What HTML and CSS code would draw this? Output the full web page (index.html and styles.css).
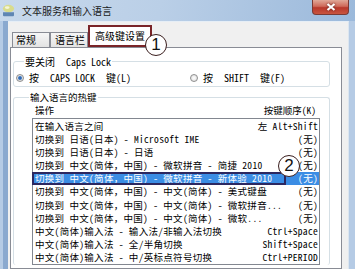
FILE: index.html
```html
<!DOCTYPE html>
<html lang="zh-CN">
<head>
    <meta charset="UTF-8">
    <title>文本服务和输入语言</title>
    <link rel="stylesheet" href="styles.css">
</head>
<body>

<div class="window">
    <div class="titlebar">
        <svg class="app-icon" viewBox="0 0 13 13">
            <ellipse cx="6.5" cy="4.6" rx="5.6" ry="3.8" fill="#d9dc8c"/>
            <ellipse cx="5.2" cy="3.6" rx="2.4" ry="1.4" fill="#f4f5d8"/>
            <path d="M1 8.2 h11 v3 a1 1 0 0 1 -1 1 h-9 a1 1 0 0 1 -1 -1z" fill="#5f86b3"/>
        </svg>
        <span class="title">文本服务和输入语言</span>
        <div class="close">
            <svg viewBox="0 0 10 8"><path d="M1.5 1 L8.5 7 M8.5 1 L1.5 7"/></svg>
        </div>
    </div>

    <div class="frame">
        <div class="dialog">
            <div class="tabs">
                <div class="tab">常规</div>
                <div class="tab">语言栏</div>
                <div class="tab active">高级键设置</div>
            </div>

            <div class="tab-page">
                <fieldset class="group caps">
                    <legend>要关闭 <span class="key">Caps Lock</span></legend>
                    <div class="radios">
                        <label class="radio">
                            <span class="dot checked"></span>
                            <span>按 <span class="key">CAPS LOCK</span> 键(L)</span>
                        </label>
                        <label class="radio">
                            <span class="dot"></span>
                            <span>按 <span class="key">SHIFT</span> 键(F)</span>
                        </label>
                    </div>
                </fieldset>

                <fieldset class="group hotkeys">
                    <legend>输入语言的热键</legend>
                    <div class="list-head">
                        <span>操作</span>
                        <span>按键顺序(K)</span>
                    </div>
                    <div class="list">
                        <div class="row"><span>在输入语言之间</span><span>左 Alt+Shift</span></div>
                        <div class="row"><span>切换到 日语(日本) - Microsoft IME</span><span>(无)</span></div>
                        <div class="row"><span>切换到 日语(日本) - 日语</span><span>(无)</span></div>
                        <div class="row"><span>切换到 中文(简体，中国) - 微软拼音 - 简捷 2010</span><span>(无)</span></div>
                        <div class="row selected">
                            <span>切换到 中文(简体，中国) - 微软拼音 - 新体验 2010</span><span>(无)</span>
                            <div class="mark"></div>
                        </div>
                        <div class="row"><span>切换到 中文(简体，中国) - 中文(简体) - 美式键盘</span><span>(无)</span></div>
                        <div class="row"><span>切换到 中文(简体，中国) - 中文(简体) - 微软拼音...</span><span>(无)</span></div>
                        <div class="row"><span>切换到 中文(简体，中国) - 中文(简体) - 微软...</span><span>(无)</span></div>
                        <div class="row"><span>中文(简体)输入法 - 输入法/非输入法切换</span><span>Ctrl+Space</span></div>
                        <div class="row"><span>中文(简体)输入法 - 全/半角切换</span><span>Shift+Space</span></div>
                        <div class="row"><span>中文(简体)输入法 - 中/英标点符号切换</span><span>Ctrl+PERIOD</span></div>
                    </div>
                </fieldset>
            </div>
        </div>
    </div>

    <!-- annotation callouts -->
    <div class="callout one">1</div>
    <div class="callout two">2</div>
</div>

</body>
</html>
```

FILE: styles.css
```css
body {
    margin: 0;
    width: 355px;
    height: 269px;
    overflow: hidden;
    font-family: "Noto Sans Mono CJK SC", "Liberation Mono", "Noto Sans CJK SC", monospace;
    font-size: 10px;
    color: #000;
    background: #b4cae3;
}

.window {
    position: relative;
    height: 269px;
    display: flex;
    flex-direction: column;
}

.titlebar {
    height: 21px;
    flex: none;
    display: flex;
    align-items: flex-start;
    background: linear-gradient(100deg, #c8d9ec 0%, #bacfe7 45%, #9bb9db 100%);
}

.app-icon {
    width: 13px;
    height: 13px;
    margin: 4px 0 0 2px;
}

.title {
    margin: 4px 0 0 7px;
    font-family: "Noto Sans CJK SC", sans-serif;
    font-size: 10px;
    line-height: 14px;
    color: #1b1b1b;
}

.close {
    margin-left: auto;
    margin-right: 6px;
    width: 37px;
    height: 15px;
    box-sizing: border-box;
    border: 1px solid #7b3a34;
    border-top: none;
    border-radius: 0 0 4px 4px;
    background: linear-gradient(#e0a898 0%, #cf6a5a 45%, #b8382b 55%, #c9553f 100%);
    display: flex;
    align-items: center;
    justify-content: center;
}

.close svg {
    width: 10px;
    height: 8px;
    stroke: #fff;
    stroke-width: 2.2;
    filter: drop-shadow(0 0 1px #5a1a14);
}

.frame {
    flex: 1;
    display: flex;
    padding: 0 6px 0 8px;
    background: linear-gradient(to right, #b5cbe5 3px, #8aa9cf 3px, #8aa9cf 8px, #b5cbe5 8px);
}

.dialog {
    flex: 1;
    display: flex;
    flex-direction: column;
    background: #f0f0f0;
    border-top: 1px solid #e6eef6;
    border-right: 1px solid #dce6f0;
    padding: 3px 6px 0 2px;
}

.tabs {
    display: flex;
    align-items: flex-end;
    padding-left: 2px;
    font-family: "Noto Sans CJK SC", sans-serif;
    font-size: 10px;
}

.tab {
    width: 38px;
    height: 15px;
    box-sizing: border-box;
    padding-left: 3px;
    line-height: 13px;
    border: 1px solid #898c95;
    border-bottom: none;
    background: linear-gradient(#f6f6f6, #e3e3e3);
}

.tab + .tab {
    padding-left: 4px;
}

.tab.active {
    width: 64px;
    height: 22px;
    padding-left: 5px;
    line-height: 17px;
    border: 2px solid #7a2428;
    background: #fff;
}

.tab-page {
    flex: 1;
    background: #fff;
    border: 1px solid #898c95;
    overflow: hidden;
}

.group {
    margin: 7px 11px 0 2px;
    padding: 0;
    border: 1px solid #d5dfe5;
    border-radius: 3px;
}

.group legend {
    padding: 0 1px;
    line-height: 13px;
}

.caps legend {
    margin-left: 10px;
}

.key {
    margin: 0 6px;
}

.caps legend .key {
    margin-right: 0;
}

.radios {
    display: grid;
    grid-template-columns: 174px auto;
    margin-top: 3px;
    padding: 0 0 2px 2px;
    line-height: 13px;
}

.radio {
    display: flex;
    align-items: center;
    gap: 5px;
}

.dot {
    width: 8px;
    height: 8px;
    box-sizing: border-box;
    border: 1px solid #8f8f8f;
    border-radius: 50%;
    background: radial-gradient(#ffffff, #d9d9d9);
}

.dot.checked {
    background: radial-gradient(#1f4f9a 0, #4f86c9 1.6px, #e4e4e4 2.4px, #cfcfcf 100%);
}

.hotkeys {
    margin-top: 4px;
    border-bottom: none;
    font-size: 9.5px;
}

.hotkeys legend {
    margin-left: 15px;
    line-height: 12px;
}

.list-head {
    display: flex;
    justify-content: space-between;
    margin-top: 1px;
    padding: 0 13px 0 21px;
    line-height: 12px;
}

.list {
    margin: 2px 9px 0 18px;
    border: 1px solid #828790;
    padding-top: 1px;
    letter-spacing: 0.3px;
}

.row {
    position: relative;
    display: flex;
    justify-content: space-between;
    height: 13.1px;
    line-height: 13.1px;
    padding: 0 1px 0 2px;
    white-space: nowrap;
}

.row.selected {
    background: #3b8de4;
    color: #fff;
}

.mark {
    position: absolute;
    left: -1px;
    top: 0;
    width: 254px;
    height: 100%;
    box-sizing: border-box;
    border: 2px solid #2c2860;
}

.callout {
    position: absolute;
    width: 22px;
    height: 22px;
    box-sizing: border-box;
    border: 1.5px solid #3a1e1e;
    border-radius: 50%;
    background: #fff;
    font-family: "Liberation Sans", sans-serif;
    font-size: 17px;
    line-height: 19px;
    text-align: center;
    color: #111;
}

.callout.one {
    left: 145px;
    top: 34px;
}

.callout.two {
    left: 278px;
    top: 155px;
}
```
